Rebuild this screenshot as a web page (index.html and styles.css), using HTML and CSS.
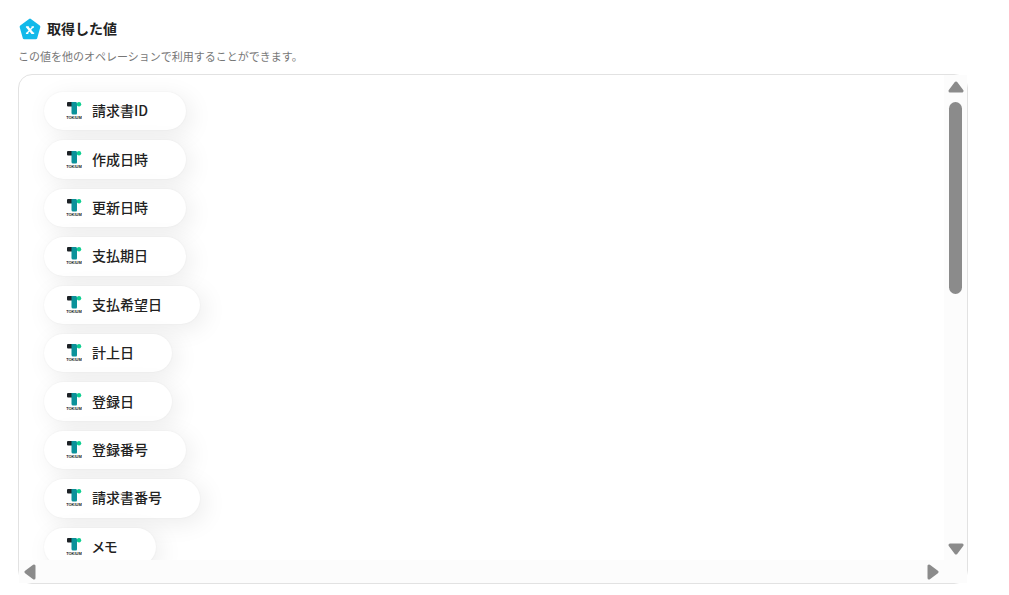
FILE: index.html
```html
<!DOCTYPE html>
<html lang="ja">
<head>
  <meta charset="UTF-8">
  <title>取得した値</title>
  <meta name="viewport" content="width=device-width, initial-scale=1">
  <link rel="stylesheet" href="styles.css">
</head>
<body>

<svg class="symbols" aria-hidden="true">
  <symbol id="mark" viewBox="0 0 16 18">
    <path fill="#1d2226" d="M2 0h5v4.500H2a1 1 0 0 1-1-1V1a1 1 0 0 1 1-1z"/>
    <circle cx="13" cy="2.300" r="2.200" fill="#0dcf91"/>
    <path fill="#0b929a" d="M5.500 0H10q1 0 1 1.500V11q0 1.500-1 1.500H7q-1.500 0-1.500-1.500z"/>
  </symbol>
</svg>

<main class="page">
  <header class="heading">
    <svg class="heading-icon" viewBox="0 0 20 20" aria-hidden="true">
      <path d="M10 2 18 8 15.200 18H4.800L2 8z" fill="#12b9ea" stroke="#12b9ea" stroke-width="2.800" stroke-linejoin="round"/>
      <path d="M7.500 8.200l4.800 5.600" fill="none" stroke="#fff" stroke-width="2.200"/>
      <path d="M12.600 8.200l-5.400 5.600M6.300 8.200h2.400M11.400 8.200h2.200M6.300 13.800h2.200M11.400 13.800h2.400" fill="none" stroke="#fff" stroke-width="1.300"/>
    </svg>
    <h1>取得した値</h1>
  </header>
  <p class="note">この値を他のオペレーションで利用することができます。</p>

  <section class="panel" aria-label="取得した値の一覧">
    <div class="viewport">
      <ul class="values">
        <li><button class="value"><svg viewBox="0 0 16 18" aria-hidden="true"><use href="#mark"/><text x="8" y="17">TOKIUM</text></svg>請求書ID</button></li>
        <li><button class="value"><svg viewBox="0 0 16 18" aria-hidden="true"><use href="#mark"/><text x="8" y="17">TOKIUM</text></svg>作成日時</button></li>
        <li><button class="value"><svg viewBox="0 0 16 18" aria-hidden="true"><use href="#mark"/><text x="8" y="17">TOKIUM</text></svg>更新日時</button></li>
        <li><button class="value"><svg viewBox="0 0 16 18" aria-hidden="true"><use href="#mark"/><text x="8" y="17">TOKIUM</text></svg>支払期日</button></li>
        <li><button class="value"><svg viewBox="0 0 16 18" aria-hidden="true"><use href="#mark"/><text x="8" y="17">TOKIUM</text></svg>支払希望日</button></li>
        <li><button class="value"><svg viewBox="0 0 16 18" aria-hidden="true"><use href="#mark"/><text x="8" y="17">TOKIUM</text></svg>計上日</button></li>
        <li><button class="value"><svg viewBox="0 0 16 18" aria-hidden="true"><use href="#mark"/><text x="8" y="17">TOKIUM</text></svg>登録日</button></li>
        <li><button class="value"><svg viewBox="0 0 16 18" aria-hidden="true"><use href="#mark"/><text x="8" y="17">TOKIUM</text></svg>登録番号</button></li>
        <li><button class="value"><svg viewBox="0 0 16 18" aria-hidden="true"><use href="#mark"/><text x="8" y="17">TOKIUM</text></svg>請求書番号</button></li>
        <li><button class="value"><svg viewBox="0 0 16 18" aria-hidden="true"><use href="#mark"/><text x="8" y="17">TOKIUM</text></svg>メモ</button></li>
      </ul>
    </div>

    <div class="bar bar-y">
      <button class="arrow" aria-label="上へ"><svg viewBox="0 0 16 12"><path d="M8 2 14 10H2z"/></svg></button>
      <div class="track"><div class="thumb"></div></div>
      <button class="arrow" aria-label="下へ"><svg viewBox="0 0 16 12"><path d="M8 10 14 2H2z"/></svg></button>
    </div>
    <div class="bar bar-x">
      <button class="arrow" aria-label="左へ"><svg viewBox="0 0 12 16"><path d="M2 8 10 2V14z"/></svg></button>
      <button class="arrow" aria-label="右へ"><svg viewBox="0 0 12 16"><path d="M10 8 2 2V14z"/></svg></button>
    </div>
  </section>
</main>

</body>
</html>
```
FILE: styles.css
```css
:root {
  --text:   #222;
  --muted:  #777;
  --border: #e2e2e2;
  --track:  #fcfcfc;
  --thumb:  #8b8b8b;
}

* { box-sizing: border-box; }

body {
  margin: 0;
  background: #fff;
  color: var(--text);
  font-family: "Noto Sans CJK JP", sans-serif;
}

button {
  border: none;
  font: inherit;
  color: inherit;
  cursor: pointer;
}

.symbols { position: absolute; width: 0; height: 0; }

.page {
  display: flex; flex-direction: column;
  height: 100vh;
  padding: 17px 41px 11px 18px;
}

.heading {
  display: flex; align-items: center;
  gap: 6px;
  height: 22px;
  padding-left: 1px;
}

.heading-icon { width: 22px; height: 22px; margin-top: 2px; }

h1 {
  margin: 0;
  font-size: 14px; font-weight: 700;
  line-height: 22px;
}

.note {
  margin: 8px 0 9px;
  color: var(--muted);
  font-size: 11px;
  line-height: 18px;
}

.panel {
  flex: 1; min-height: 0;
  display: grid;
  grid-template: minmax(0, 1fr) 23px / minmax(0, 1fr) 23px;
  border: 1px solid var(--border);
  border-radius: 14px;
}

.viewport {
  overflow: hidden;
  padding: 17px 25px;
}

.values {
  display: grid;
  grid-auto-rows: 1fr;
  gap: 10px;
  min-height: 474px;
  margin: 0; padding: 0;
  list-style: none;
}

.values li { display: flex; }

.value {
  display: flex; align-items: center;
  gap: 10px;
  padding: 0 38px 2px 22px;
  background: #fff;
  border-radius: 20px;
  box-shadow: 0 0 2px rgba(0,0,0,.06), 5px 5px 24px rgba(0,0,0,.08);
  font-size: 14px; font-weight: 500;
  font-feature-settings: "palt";
  white-space: nowrap;
}

.value svg { width: 16px; height: 18px; margin-top: 2px; }

.value text {
  font: 700 4px "Liberation Sans", sans-serif;
  font-feature-settings: normal;
  text-anchor: middle;
  fill: #222;
}

.bar {
  display: flex; align-items: center;
  background: var(--track);
}

.bar-y { flex-direction: column; padding: 6px 0 5px; }

.bar-x {
  grid-column: 1 / -1;
  justify-content: space-between;
  padding: 0 28px 0 5px;
}

.arrow {
  display: flex;
  padding: 0;
  background: none;
}

.arrow svg {
  fill: var(--thumb);
  stroke: var(--thumb);
  stroke-width: 3;
  stroke-linejoin: round;
}

.bar-y svg { width: 16px; height: 12px; }
.bar-x svg { width: 12px; height: 16px; }

.track {
  flex: 1;
  width: 13px;
  padding: 9px 0;
}

.thumb {
  height: 44.5%;
  background: var(--thumb);
  border-radius: 7px;
}
```
